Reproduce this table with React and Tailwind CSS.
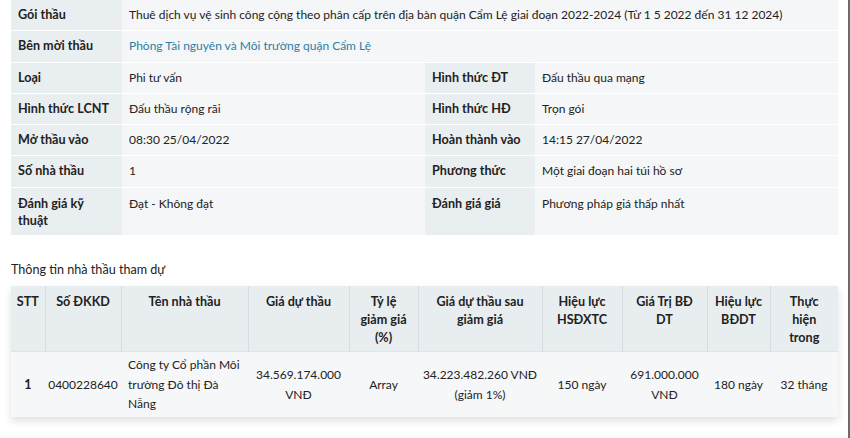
import React from 'react';

const font = { fontFamily: 'Lato, "Open Sans", sans-serif' };

const Label = ({ children, className = 'h-[30.3px]' }) => (
  <div className={`whitespace-nowrap bg-[#e9eef0] px-[7px] py-[6px] text-[12.6px] font-bold leading-[17px] ${className}`}>{children}</div>
);

const Value = ({ children, className = 'h-[30.3px]' }) => (
  <div className={`whitespace-nowrap bg-[#f4f6f7] px-[7px] py-[6px] leading-[17px] ${className}`}>{children}</div>
);

const headers = [
  ['STT'],
  ['Số ĐKKD'],
  ['Tên nhà thầu'],
  ['Giá dự thầu'],
  ['Tỷ lệ', 'giảm giá', '(%)'],
  ['Giá dự thầu sau', 'giảm giá'],
  ['Hiệu lực', 'HSĐXTC'],
  ['Giá Trị BĐ', 'DT'],
  ['Hiệu lực', 'BĐDT'],
  ['Thực', 'hiện', 'trong'],
];

const widths = [34, 76, 127, 101, 69, 124, 80, 85, 63, 68];

export default function App() {
  return (
    <div className="relative h-[438px] w-[850px] overflow-hidden bg-white text-[12px] text-[#222]" style={font}>
      <div className="absolute right-0 top-0 h-full w-[2px] bg-[#6b6b6b]" />
      <div className="ml-[11px] w-[827px]">
        {/* thong tin goi thau */}
        <div className="grid grid-cols-[111px_303px_110px_303px] gap-y-[1px]">
          <Label>Gói thầu</Label>
          <Value className="col-span-3 h-[30.3px]">
            Thuê dịch vụ vệ sinh công cộng theo phân cấp trên địa bàn quận Cẩm Lệ giai đoạn 2022-2024 (Từ 1 5 2022 đến 31 12 2024)
          </Value>
          <Label>Bên mời thầu</Label>
          <Value className="col-span-3 h-[30.3px] text-[#2d7ea6]">Phòng Tài nguyên và Môi trường quận Cẩm Lệ</Value>
          <Label>Loại</Label>
          <Value>Phi tư vấn</Value>
          <Label>Hình thức ĐT</Label>
          <Value>Đấu thầu qua mạng</Value>
          <Label>Hình thức LCNT</Label>
          <Value>Đấu thầu rộng rãi</Value>
          <Label>Hình thức HĐ</Label>
          <Value>Trọn gói</Value>
          <Label>Mở thầu vào</Label>
          <Value>08:30 25/04/2022</Value>
          <Label>Hoàn thành vào</Label>
          <Value>14:15 27/04/2022</Value>
          <Label>Số nhà thầu</Label>
          <Value>1</Value>
          <Label>Phương thức</Label>
          <Value>Một giai đoạn hai túi hồ sơ</Value>
          <Label className="h-[47px] pt-[7px]">Đánh giá kỹ<br />thuật</Label>
          <Value className="h-[47px] pt-[7px]">Đạt - Không đạt</Value>
          <Label className="h-[47px] pt-[7px]">Đánh giá giá</Label>
          <Value className="h-[47px] pt-[7px]">Phương pháp giá thấp nhất</Value>
        </div>

        <div className="mt-[26px] text-[12.6px] leading-[18px]">Thông tin nhà thầu tham dự</div>

        {/* nha thau tham du */}
        <table className="mt-[7px] w-[827px] table-fixed border-collapse shadow-[0_4px_8px_rgba(0,0,0,0.12)]">
          <colgroup>
            {widths.map((w, i) => (
              <col key={i} style={{ width: w }} />
            ))}
          </colgroup>
          <thead>
            <tr className="h-[65px] bg-[#e8edf0]">
              {headers.map((h, i) => (
                <th
                  key={i}
                  className={`border-l border-[#d6dcdf] pb-[4px] pt-[7px] align-top text-center text-[12.6px] font-bold leading-[18px] ${i === 0 ? 'border-l-0' : ''}`}
                >
                  {h.map((line, j) => (
                    <div key={j}>{line}</div>
                  ))}
                </th>
              ))}
            </tr>
          </thead>
          <tbody>
            <tr className="h-[66px] border-t border-[#dfe4e6] bg-[#f6f7f8] text-center leading-[19.5px]">
              <td className="text-[12.6px] font-bold">1</td>
              <td>0400228640</td>
              <td className="px-[7px] text-left">Công ty Cổ phần Môi trường Đô thị Đà Nẵng</td>
              <td>34.569.174.000<br />VNĐ</td>
              <td>Array</td>
              <td>34.223.482.260 VNĐ<br />(giảm 1%)</td>
              <td>150 ngày</td>
              <td>691.000.000<br />VNĐ</td>
              <td>180 ngày</td>
              <td>32 tháng</td>
            </tr>
          </tbody>
        </table>
      </div>
    </div>
  );
}
